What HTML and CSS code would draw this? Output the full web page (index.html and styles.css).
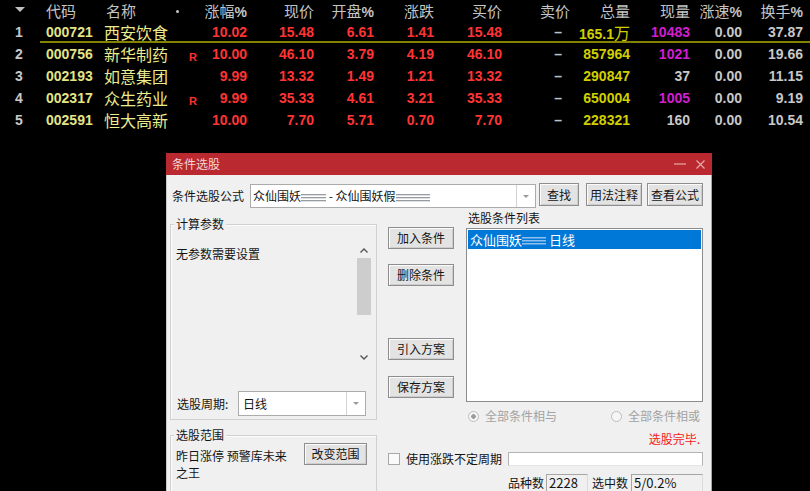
FILE: index.html
```html
<!DOCTYPE html>
<html lang="zh">
<head>
<meta charset="utf-8">
<title>条件选股</title>
<link rel="stylesheet" href="styles.css">
</head>
<body>
<div class="quotes">
  <div class="row head">
    <div class="c-no"><svg class="sort" width="10" height="5" viewBox="0 0 10 5"><path d="M0 0H10L5 5Z" fill="#c0c0c0"/></svg></div>
    <div class="c-code cn">代码</div>
    <div class="c-name cn">名称</div>
    <div class="c-mark"><span class="hdot"></span></div>
    <div class="num cn">涨幅<b>%</b></div>
    <div class="num cn">现价</div>
    <div class="num cn">开盘<b>%</b></div>
    <div class="num cn">涨跌</div>
    <div class="num cn">买价</div>
    <div class="num cn">卖价</div>
    <div class="num cn">总量</div>
    <div class="num cn">现量</div>
    <div class="num cn">涨速<b>%</b></div>
    <div class="num cn">换手<b>%</b></div>
  </div>
  <div class="row first">
    <div class="c-no">1</div><div class="c-code">000721</div><div class="c-name">西安饮食</div><div class="c-mark"></div>
    <div class="num red">10.02</div><div class="num red">15.48</div><div class="num red">6.61</div><div class="num red">1.41</div><div class="num red">15.48</div>
    <div class="num dash">–</div><div class="num yel">165.1<span class="wan">万</span></div><div class="num mag">10483</div><div class="num gry">0.00</div><div class="num gry">37.87</div>
  </div>
  <div class="row">
    <div class="c-no">2</div><div class="c-code">000756</div><div class="c-name">新华制药</div><div class="c-mark"><span class="r">R</span></div>
    <div class="num red">10.00</div><div class="num red">46.10</div><div class="num red">3.79</div><div class="num red">4.19</div><div class="num red">46.10</div>
    <div class="num dash">–</div><div class="num yel">857964</div><div class="num mag">1021</div><div class="num gry">0.00</div><div class="num gry">19.66</div>
  </div>
  <div class="row">
    <div class="c-no">3</div><div class="c-code">002193</div><div class="c-name">如意集团</div><div class="c-mark"></div>
    <div class="num red">9.99</div><div class="num red">13.32</div><div class="num red">1.49</div><div class="num red">1.21</div><div class="num red">13.32</div>
    <div class="num dash">–</div><div class="num yel">290847</div><div class="num gry">37</div><div class="num gry">0.00</div><div class="num gry">11.15</div>
  </div>
  <div class="row">
    <div class="c-no">4</div><div class="c-code">002317</div><div class="c-name">众生药业</div><div class="c-mark"><span class="r">R</span></div>
    <div class="num red">9.99</div><div class="num red">35.33</div><div class="num red">4.61</div><div class="num red">3.21</div><div class="num red">35.33</div>
    <div class="num dash">–</div><div class="num yel">650004</div><div class="num mag">1005</div><div class="num gry">0.00</div><div class="num gry">9.19</div>
  </div>
  <div class="row">
    <div class="c-no">5</div><div class="c-code">002591</div><div class="c-name">恒大高新</div><div class="c-mark"></div>
    <div class="num red">10.00</div><div class="num red">7.70</div><div class="num red">5.71</div><div class="num red">0.70</div><div class="num red">7.70</div>
    <div class="num dash">–</div><div class="num yel">228321</div><div class="num gry">160</div><div class="num gry">0.00</div><div class="num gry">10.54</div>
  </div>
</div>

<div class="dlg">
  <div class="titlebar">
    <span class="title">条件选股</span>
    <span class="tb-btns">
      <svg class="tb-min" width="12" height="2" viewBox="0 0 12 2"><path d="M0 1H12" stroke="#eaa7a9" stroke-width="1.2"/></svg>
      <svg class="tb-close" width="9" height="9" viewBox="0 0 9 9"><path d="M0.5 0.5L8.5 8.5M8.5 0.5L0.5 8.5" stroke="#eaa7a9" stroke-width="1.2"/></svg>
    </span>
  </div>
  <div class="dlg-body">
    <div class="toprow">
      <span class="lbl">条件选股公式</span>
      <div class="combo wide">
        <div class="combo-text">众仙围妖<i class="blur b1"></i> - 众仙围妖假<i class="blur b2"></i></div>
        <div class="combo-arrow"><svg width="6" height="3" viewBox="0 0 6 3"><path d="M0 0H6L3 3Z" fill="#9a9a9a"/></svg></div>
      </div>
      <button class="btn tbtn b-find">查找</button>
      <button class="btn tbtn b-usage">用法注释</button>
      <button class="btn tbtn b-view">查看公式</button>
    </div>
    <div class="main">
      <div class="leftcol">
        <div class="group g1">
          <span class="gtitle">计算参数</span>
          <div class="params">
            <div class="ptext">无参数需要设置</div>
            <div class="vscroll">
              <div class="sarrow"><svg width="8" height="5" viewBox="0 0 8 5"><path d="M0.5 4.5L4 1L7.5 4.5" fill="none" stroke="#555" stroke-width="1.4"/></svg></div>
              <div class="thumb"></div>
              <div class="strack"></div>
              <div class="sarrow"><svg width="8" height="5" viewBox="0 0 8 5"><path d="M0.5 0.5L4 4L7.5 0.5" fill="none" stroke="#555" stroke-width="1.4"/></svg></div>
            </div>
          </div>
          <div class="period">
            <span class="plbl">选股周期:</span>
            <div class="combo small">
              <div class="combo-text">日线</div>
              <div class="combo-arrow"><svg width="6" height="3" viewBox="0 0 6 3"><path d="M0 0H6L3 3Z" fill="#9a9a9a"/></svg></div>
            </div>
          </div>
        </div>
        <div class="group g2">
          <span class="gtitle">选股范围</span>
          <div class="range">
            <div class="rtext">昨日涨停 预警库未来之王</div>
            <button class="btn rbtn">改变范围</button>
          </div>
        </div>
      </div>
      <div class="rightcol">
        <div class="upper">
          <div class="midbtns">
            <button class="btn mb1">加入条件</button>
            <button class="btn mb2">删除条件</button>
            <button class="btn mb3">引入方案</button>
            <button class="btn mb4">保存方案</button>
          </div>
          <div class="listcol">
            <div class="llbl">选股条件列表</div>
            <div class="listbox">
              <div class="item sel">众仙围妖<i class="blur b3"></i> 日线</div>
            </div>
            <div class="radios">
              <span class="ropt"><span class="radio on"></span><span class="rtxt">全部条件相与</span></span>
              <span class="ropt"><span class="radio"></span><span class="rtxt">全部条件相或</span></span>
            </div>
            <div class="status">选股完毕.</div>
          </div>
        </div>
        <div class="chkrow">
          <span class="chk"></span>
          <span class="chktxt">使用涨跌不定周期</span>
          <span class="tbox"></span>
        </div>
        <div class="counts">
          <span>品种数</span><span class="rbox rb1">2228</span>
          <span class="c2">选中数</span><span class="rbox rb2">5/0.2%</span>
        </div>
      </div>
    </div>
  </div>
</div>
</body>
</html>
```
FILE: styles.css
```css
html, body {
  margin: 0;
  height: 100%;
  overflow: hidden;
}
body {
  background: #000;
  position: relative;
  font-family: "Liberation Sans", "Noto Sans CJK SC", sans-serif;
}

/* quote table */
.row {
  display: grid;
  grid-template-columns: 40px 60px 70px 30px 47px 67px 60px 60px 68px 68px 60px 60px 52px 61px;
  height: 22px;
  line-height: 22px;
  font-size: 14px;
  font-weight: bold;
  white-space: nowrap;
}
.row.head {
  height: 21px;
  line-height: 21px;
  font-weight: normal;
  color: #c4c4c4;
}
.row.first {
  background: linear-gradient(#838300, #838300) no-repeat 40px 20px / calc(100% - 40px) 2px;
}
.cn {
  font-family: "Noto Sans CJK SC", sans-serif;
  font-size: 15px;
}
.cn b {
  font-family: "Liberation Sans", sans-serif;
  font-weight: bold;
  font-size: 14px;
}
.c-no {
  padding-left: 15px;
  color: #c8c8c8;
}
.sort {
  vertical-align: 3px;
}
.c-code {
  padding-left: 6px;
  color: #e4e486;
}
.head .c-code {
  color: #c4c4c4;
}
.c-name {
  padding-left: 4px;
  font-family: "Noto Sans CJK SC", sans-serif;
  font-weight: normal;
  font-size: 16px;
  color: #ecec8e;
}
.head .c-name {
  padding-left: 6px;
  font-size: 15px;
  color: #c4c4c4;
}
.c-mark {
  padding-left: 6px;
}
.hdot {
  display: inline-block;
  width: 3px;
  height: 3px;
  border-radius: 50%;
  background: #c4c4c4;
  vertical-align: middle;
}
.r {
  display: block;
  padding: 4px 0 0 13px;
  line-height: 20px;
  font-size: 11px;
  color: #ff3030;
}
.num {
  text-align: right;
}
.red { color: #ff3434; }
.yel { color: #d0d000; }
.mag { color: #d21ed2; }
.gry { color: #c8c8c8; }
.dash {
  padding-right: 8px;
  color: #c0c0c0;
}
.wan {
  font-family: "Noto Sans CJK SC", sans-serif;
  font-weight: normal;
  font-size: 16px;
}

/* dialog window */
.dlg {
  position: absolute;
  left: 166px;
  top: 153px;
  width: 546px;
  height: 345px;
  background: #f0f0f0;
  box-shadow: inset -1px 0 #a6a6a6, inset 1px 0 #c8c8c8;
  font-family: "Noto Sans CJK SC", sans-serif;
  font-size: 12px;
  color: #141414;
  overflow: hidden;
}
.titlebar {
  height: 22px;
  background: #b9292f;
  display: flex;
  align-items: center;
  padding-left: 6px;
  line-height: 14px;
  color: #f5d6d7;
}
.tb-btns {
  margin-left: auto;
  display: flex;
  align-items: center;
}
.tb-min {
  margin-right: 10px;
}
.tb-close {
  margin-right: 7px;
}
.dlg-body {
  padding: 8px 8px 0 4px;
}
.toprow {
  display: flex;
  align-items: flex-start;
  height: 25px;
}
.lbl {
  margin-left: 2px;
  width: 72px;
  line-height: 25px;
}
.combo {
  box-sizing: border-box;
  display: flex;
  background: #fff;
  border: 1px solid #ababab;
}
.combo.wide {
  margin: 1px 0 0 6px;
  width: 286px;
  height: 24px;
  line-height: 22px;
}
.combo-text {
  flex: 1;
  padding-left: 2px;
  white-space: nowrap;
  overflow: hidden;
}
.combo-arrow {
  width: 18px;
  border-left: 1px solid #d2d2d2;
  display: flex;
  align-items: center;
  justify-content: center;
}
.blur {
  display: inline-block;
  height: 8px;
  vertical-align: middle;
  background: repeating-linear-gradient(#868b94 0 1px, #d9dbe0 1px 2px, #fff 2px 3px);
  filter: blur(0.5px);
  opacity: 0.85;
}
.b1 { width: 25px; }
.b2 { width: 34px; }
.b3 {
  width: 24px;
  background: repeating-linear-gradient(#a9cdf2 0 1px, #5aa2e6 1px 2px, #0078d7 2px 3px);
}
.btn {
  box-sizing: border-box;
  height: 22px;
  padding: 0;
  border: 1px solid #8e8e8e;
  background: #e3e3e3;
  box-shadow: inset 1px 1px #fbfbfb, inset -1px -1px #cdcdcd;
  font: 12px/20px "Noto Sans CJK SC", sans-serif;
  color: #141414;
  text-align: center;
}
.tbtn {
  height: 23px;
  line-height: 21px;
  width: 56px;
}
.b-find { margin-left: 3px; width: 40px; }
.b-usage { margin-left: 7px; }
.b-view { margin-left: 5px; }

.main {
  display: flex;
  align-items: flex-start;
}
.leftcol {
  width: 207px;
}
.group {
  box-sizing: border-box;
  position: relative;
  border: 1px solid #d0d0d0;
  box-shadow: inset 1px 1px #fcfcfc;
}
.gtitle {
  position: absolute;
  top: -8px;
  left: 3px;
  padding: 0 2px;
  line-height: 14px;
  background: #f0f0f0;
}
.g1 {
  margin-top: 16px;
  height: 196px;
}
.params {
  display: flex;
  margin: 17px 0 0 1px;
  width: 200px;
  height: 123px;
}
.ptext {
  flex: 1;
  padding: 5px 4px;
  line-height: 14px;
}
.vscroll {
  width: 16px;
  display: flex;
  flex-direction: column;
  align-items: center;
}
.sarrow {
  height: 16px;
  width: 16px;
  display: flex;
  align-items: center;
  justify-content: center;
}
.thumb {
  width: 14px;
  height: 57px;
  background: #cdcdcd;
}
.strack {
  flex: 1;
}
.period {
  display: flex;
  align-items: center;
  margin-top: 26px;
  height: 25px;
}
.plbl {
  margin-left: 6px;
  width: 53px;
}
.combo.small {
  margin-left: 8px;
  width: 128px;
  height: 25px;
  line-height: 23px;
}
.combo.small .combo-text {
  padding-left: 4px;
}
.g2 {
  margin-top: 15px;
  height: 80px;
}
.range {
  display: flex;
  align-items: flex-start;
}
.rtext {
  margin: 11px 0 0 5px;
  width: 118px;
  line-height: 17px;
}
.rbtn {
  margin: 7px 9px 0 auto;
  width: 63px;
}
.rightcol {
  margin-left: 11px;
  width: 315px;
}
.upper {
  display: flex;
  align-items: flex-start;
}
.midbtns {
  width: 66px;
  display: flex;
  flex-direction: column;
}
.mb1 { margin-top: 19px; }
.mb2 { margin-top: 15px; }
.mb3 { margin-top: 52px; }
.mb4 { margin-top: 16px; }
.listcol {
  margin-left: 12px;
  width: 237px;
}
.llbl {
  margin-top: 3px;
  padding-left: 2px;
  line-height: 14px;
}
.listbox {
  box-sizing: border-box;
  margin-top: 3px;
  height: 174px;
  padding: 1px;
  border: 1px solid #8c8c8c;
  background: #fff;
}
.item {
  height: 19px;
  line-height: 19px;
  padding-left: 2px;
  font-size: 13px;
  white-space: nowrap;
}
.item.sel {
  background: #0078d7;
  color: #fff;
}
.radios {
  display: flex;
  justify-content: space-between;
  align-items: center;
  margin-top: 8px;
  height: 12px;
  padding: 0 3px 0 2px;
  color: #a2a2a2;
}
.ropt {
  display: flex;
  align-items: center;
}
.radio {
  box-sizing: border-box;
  width: 11px;
  height: 11px;
  border-radius: 50%;
  border: 1px solid #bdbdbd;
  background: #f6f6f6;
}
.radio.on {
  background: radial-gradient(circle, #9c9c9c 0 2px, #f6f6f6 2.6px);
}
.rtxt {
  margin-left: 6px;
  line-height: 12px;
}
.status {
  margin-top: 10px;
  padding-right: 3px;
  line-height: 14px;
  text-align: right;
  color: #f42020;
}
.chkrow {
  display: flex;
  align-items: center;
  margin-top: 6px;
  height: 14px;
}
.chk {
  box-sizing: border-box;
  width: 12px;
  height: 12px;
  border: 1px solid #a8a8a8;
  background: #fafafa;
}
.chktxt {
  margin-left: 6px;
  line-height: 14px;
}
.tbox {
  box-sizing: border-box;
  margin-left: 6px;
  width: 195px;
  height: 14px;
  border: 1px solid #b4b4b4;
  border-bottom-color: #e4e4e4;
  background: #fff;
}
.counts {
  display: flex;
  align-items: center;
  margin-top: 8px;
  padding-left: 120px;
  height: 18px;
  line-height: 18px;
}
.rbox {
  box-sizing: border-box;
  height: 18px;
  line-height: 16px;
  padding-left: 2px;
  border: 1px solid;
  border-color: #a6a6a6 #dadada #dadada #a6a6a6;
  background: #f0f0f0;
  font-size: 13px;
}
.rb1 {
  margin-left: 2px;
  width: 42px;
}
.c2 {
  margin-left: 4px;
}
.rb2 {
  margin-left: 3px;
  width: 72px;
}
```
